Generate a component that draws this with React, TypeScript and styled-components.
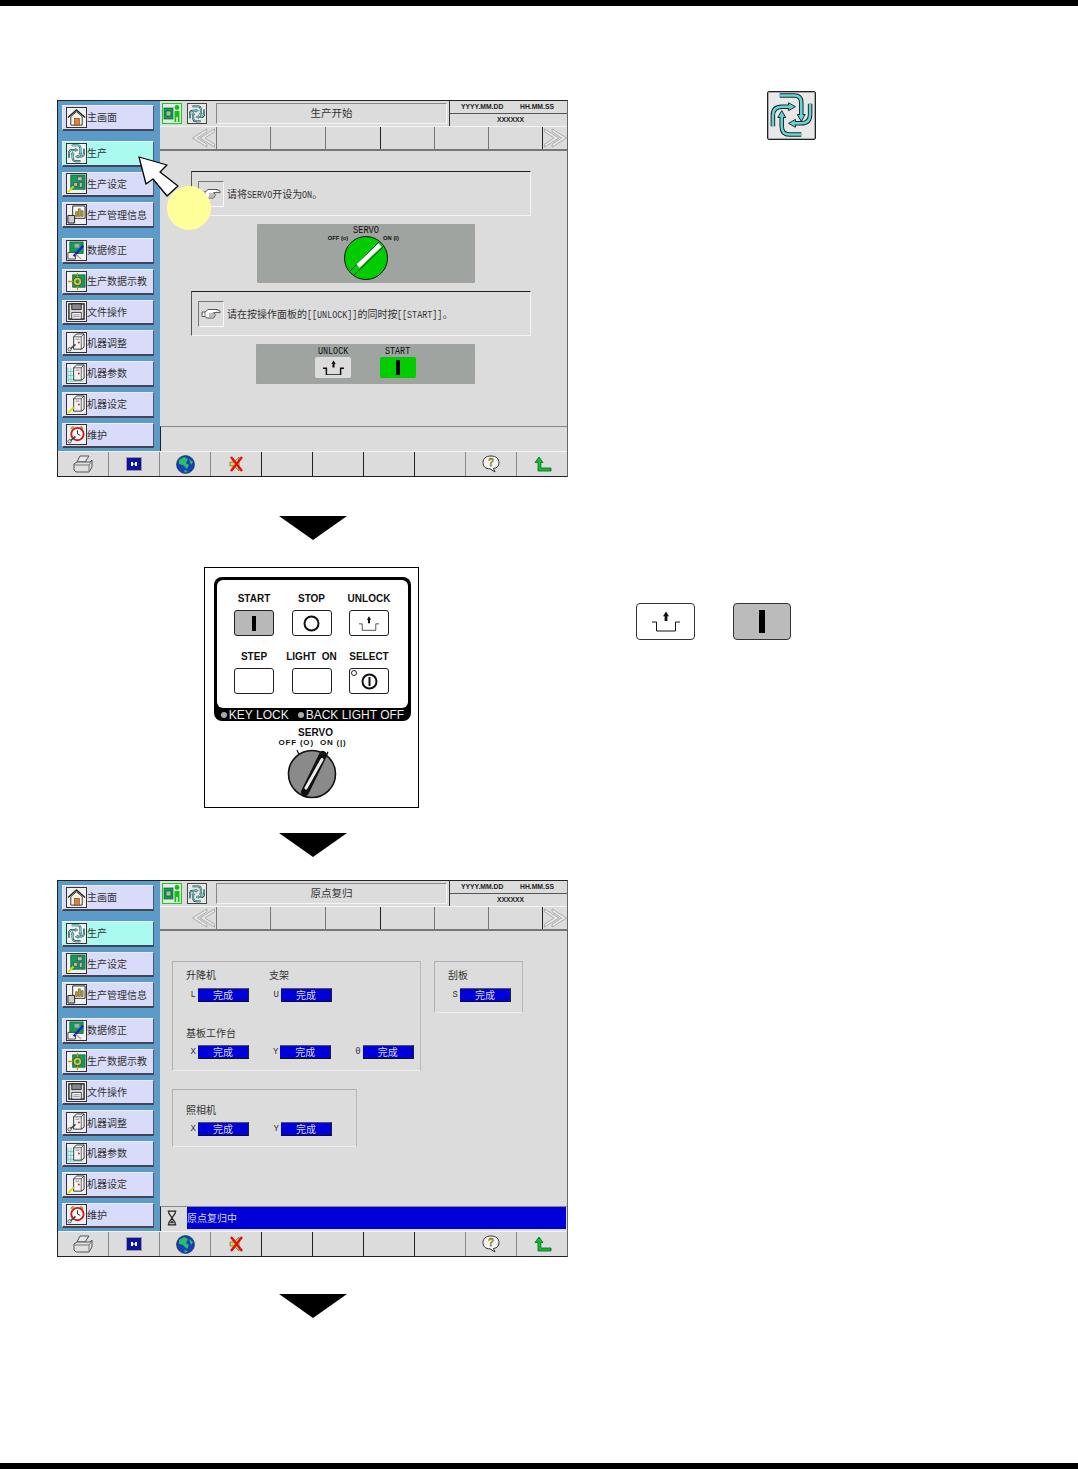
import React from 'react';
import styled, { createGlobalStyle } from 'styled-components';

const cjk = `"Noto Sans CJK SC", "Liberation Sans", sans-serif`;
const sans = `"Liberation Sans", Arial, sans-serif`;
const mono = `"Liberation Mono", monospace`;

const Global = createGlobalStyle`
  html, body { margin: 0; padding: 0; background: #fff; }
  body { font-family: ${cjk}; }
  * { box-sizing: border-box; }
`;

const Page = styled.div`
  width: 1078px; height: 1469px; display: flex; flex-direction: column; overflow: hidden; background: #fff;
`;
const EdgeBar = styled.div<{ $bottom?: boolean }>`
  height: 6px; flex: none; background: #000; margin-top: ${p => (p.$bottom ? 'auto' : '0')};
`;
const Sheet = styled.div`
  display: flex; flex-direction: column; padding: 85px 0 0 57px;
`;
const StepRow = styled.div`
  display: flex; align-items: flex-start;
`;
const DownArrow = styled.div<{ $top: number }>`
  width: 0; height: 0; margin: ${p => p.$top}px 0 0 222px;
  border-left: 34px solid transparent; border-right: 34px solid transparent; border-top: 24px solid #000;
`;

/* touch screen */
const Screen = styled.div<{ $top: number }>`
  position: relative; flex: none; width: 511px; height: 377px; margin-top: ${p => p.$top}px;
  border: 1px solid #222; border-right-color: #666; background: #dcdcdc;
  display: grid; grid-template-columns: 102px 1fr; grid-template-rows: 350px 25px;
`;
const Sidebar = styled.div`
  background: #5a9bc9; padding: 4px 0 0 4px; display: flex; flex-direction: column; gap: 5px;
`;
const SideButton = styled.div<{ $active?: boolean; $after?: number }>`
  width: 92px; height: 25.75px; flex: none; display: flex; align-items: center; padding-left: 3px;
  margin-bottom: ${p => p.$after ?? 0}px;
  background: ${p => (p.$active ? '#aafaf0' : '#d8dcfa')};
  border: 1px solid #eef; border-right-color: #556; border-bottom: 2px solid #445;
  font-size: 10px; line-height: 1; color: #333; white-space: nowrap;
`;
const IconBox = styled.span`
  width: 21px; height: 21px; flex: none; display: flex; align-items: center; justify-content: center;
  background: #f2f2f2; border: 1px solid #333;
  svg { display: block; }
`;
const Main = styled.div`
  display: flex; flex-direction: column; min-width: 0;
`;
const HeaderRow = styled.div`
  height: 25px; flex: none; display: flex; align-items: flex-start;
`;
const HeaderIcon = styled.span<{ $green?: boolean; $left: number }>`
  width: 20px; height: 21px; flex: none; margin: 2px 0 0 ${p => p.$left}px; display: flex; align-items: center; justify-content: center;
  border: 1px solid ${p => (p.$green ? '#16d016' : '#444')}; background: #e8e8e8;
`;
const TitleBox = styled.div`
  width: 231px; height: 21px; flex: none; margin: 2px 0 0 9px; display: flex; align-items: center; justify-content: center;
  border: 1px solid #888; border-right-color: #f4f4f4; border-bottom-color: #f4f4f4;
  font-size: 10.5px; line-height: 1; color: #333;
`;
const DateBox = styled.div`
  flex: 1; margin-left: 2px; display: flex; flex-direction: column;
  font-family: ${sans}; font-weight: 700; font-size: 6.8px; line-height: 1; color: #222;
`;
const DateRow = styled.div`
  height: 13px; flex: none; display: flex; align-items: center; justify-content: space-between; padding: 0 13px 0 11px;
  border-left: 1px solid #333; border-bottom: 1px solid #555;
`;
const CodeRow = styled.div`
  height: 12px; flex: none; display: flex; align-items: center; justify-content: center; padding: 1px 0 0 4px;
  border-left: 1px solid #333;
`;
const NavRow = styled.div`
  height: 25px; flex: none; display: flex; padding-left: 31px; border-top: 1px solid #f4f4f4; border-bottom: 2px solid #777;
`;
const NavCell = styled.div<{ $w: number; $dark?: boolean }>`
  width: ${p => p.$w}px; flex: none; display: flex; align-items: center; justify-content: center;
  border-right: 1px solid ${p => (p.$dark ? '#222' : '#777')};
  &:last-child { border-right: none; }
`;
const PromptContent = styled.div`
  flex: 1; min-height: 0; padding: 20px 0 0 31px; display: flex; flex-direction: column; align-items: flex-start; gap: 8px;
`;
const MessageBox = styled.div`
  width: 340px; height: 45px; flex: none; display: flex; align-items: center; gap: 3px; padding-left: 6px;
  border: 1px solid #f4f4f4; border-top-color: #222; border-left-color: #555;
  font-size: 10px; line-height: 1; color: #333; white-space: nowrap;
`;
const MessageText = styled.span`
  padding-top: 2px;
`;
const HandFrame = styled.span`
  width: 26px; height: 26px; flex: none; display: flex; align-items: center; justify-content: center;
  border: 1px solid #f8f8f8; border-top-color: #777; border-left-color: #777;
`;
/* narrow bitmap-style latin: a 6px mono cell squeezed to 5px */
const Narrow = styled.span<{ $n: number }>`
  display: inline-block; font-family: ${mono}; font-size: 10px; line-height: 1;
  transform: scaleX(.84); transform-origin: 0 50%; margin-right: ${p => -p.$n * 0.96}px;
`;
const GrayPanel = styled.div<{ $h: number; $left: number; $w: number }>`
  width: ${p => p.$w}px; height: ${p => p.$h}px; flex: none; margin-left: ${p => p.$left}px; background: #a0a4a0;
  border-radius: 1px;
`;
const ServoArt = styled.svg`
  display: block;
`;
const KeyPanel = styled(GrayPanel)`
  display: flex; gap: 29px; padding: 3px 0 0 59px;
`;
const KeyColumn = styled.div`
  width: 36px; display: flex; flex-direction: column; align-items: center; color: #111;
`;
const KeyLabel = styled.div`
  height: 10px; display: flex; align-items: center; white-space: nowrap;
`;
const KeyCap = styled.div<{ $green?: boolean }>`
  width: 36px; height: 21px; display: flex; align-items: center; justify-content: center; border-radius: 2px;
  background: ${p => (p.$green ? '#00cc00' : '#dcdcdc')};
`;
const StatusBar = styled.div`
  height: 25px; flex: none; margin-top: auto; display: flex; align-items: stretch; gap: 4px; padding: 0 1px 2px 0;
  border-top: 1px solid #888; border-left: 1px solid #222;
  font-size: 10px; color: #dde;
`;
const HourglassCell = styled.div`
  width: 22px; flex: none; display: flex; align-items: center; justify-content: center;
`;
const StatusText = styled.div<{ $blue?: boolean }>`
  flex: 1; display: flex; align-items: center; background: ${p => (p.$blue ? '#0000d8' : 'transparent')}; line-height: 1;
`;
const Toolbar = styled.div`
  grid-column: 1 / -1; display: grid; grid-template-columns: repeat(10, 51px); border-top: 1px solid #f4f4f4;
`;
const ToolCell = styled.div<{ $dark?: boolean }>`
  display: flex; align-items: center; justify-content: center;
  border-right: 1px solid ${p => (p.$dark ? '#222' : '#888')};
  &:last-child { border-right: none; }
`;
const Callout = styled.svg`
  position: absolute; left: 72px; top: 48px; pointer-events: none;
`;

/* homing content */
const HomingContent = styled.div`
  flex: 1; min-height: 0; padding: 30px 0 0 12px; display: flex; flex-direction: column;
`;
const GroupRow = styled.div`
  display: flex; gap: 13px; align-items: flex-start;
`;
const Group = styled.div<{ $w: number; $h: number; $pad: number; $top?: number }>`
  width: ${p => p.$w}px; height: ${p => p.$h}px; flex: none; padding-top: ${p => p.$pad}px; margin-top: ${p => p.$top ?? 0}px;
  border: 1px solid #b0b0b0; border-bottom-color: #ececec; border-right-color: #b8b8b8;
`;
const TitleRow = styled.div<{ $gap?: number; $top?: number }>`
  display: flex; height: 12px; margin-top: ${p => p.$top ?? 0}px; margin-bottom: ${p => p.$gap ?? 7}px;
`;
const GroupTitle = styled.div`
  width: 83px; padding-left: 13px; font-size: 10px; line-height: 12px; color: #333; white-space: nowrap;
`;
const FieldRow = styled.div`
  display: flex;
`;
const Axis = styled.div`
  width: 83px; display: flex; align-items: center;
`;
const AxisName = styled.span`
  width: 25px; padding-right: 2px; text-align: right; font-family: ${mono}; font-size: 9px; line-height: 1; color: #333;
`;
const DoneField = styled.div`
  width: 51px; height: 14px; display: flex; align-items: center; justify-content: center;
  background: #0000d8; border-top: 1px solid #555; border-bottom: 1px solid #111; border-right: 1px solid #222;
  font-size: 10px; line-height: 1; color: #d8d8ff;
`;

/* operation panel */
const OpPanel = styled.div`
  width: 215px; height: 241px; flex: none; margin: 27px 0 0 147px; padding: 9px 7px 0 9px; border: 1px solid #000;
  display: flex; flex-direction: column; align-items: center;
`;
const OpFrame = styled.div`
  width: 197px; height: 144px; flex: none; padding: 3px 3px 0; background: #000; border-radius: 8px; display: flex; flex-direction: column;
`;
const OpFace = styled.div`
  height: 128px; flex: none; background: #fff; border-radius: 6px; padding: 12px 0 0 17px;
  display: grid; grid-template-columns: repeat(3, 40px); column-gap: 17.5px; row-gap: 14px; align-content: start;
`;
const OpCell = styled.div`
  display: flex; flex-direction: column; align-items: center; gap: 6px;
`;
const OpLabel = styled.div`
  height: 12px; font: 700 10px/14px ${sans}; color: #111; white-space: pre;
`;
const OpKey = styled.div<{ $gray?: boolean }>`
  position: relative; width: 40px; height: 26px; display: flex; align-items: center; justify-content: center;
  border: 1px solid #222; border-radius: 3px; background: ${p => (p.$gray ? '#b8b8b8' : '#fff')};
`;
const Led = styled.span`
  position: absolute; left: 1px; top: 1px; width: 6px; height: 6px; border-radius: 50%; border: 1px solid #222; background: #fff;
`;
const OpStrip = styled.div`
  height: 13px; display: flex; align-items: center; justify-content: center; gap: 9px; padding-top: 1px;
  color: #eee; font: 400 12px/13px ${sans}; white-space: nowrap;
`;
const StripItem = styled.span`
  display: flex; align-items: center; gap: 2px;
`;
const StripDot = styled.span`
  width: 6px; height: 6px; border-radius: 50%; background: #aaa;
`;
const ServoTitle = styled.div`
  margin-top: 6px; padding-left: 6px; font: 700 10px/11px ${sans}; color: #111;
`;
const ServoStates = styled.div`
  font: 700 8px/9px ${sans}; letter-spacing: .8px; color: #111; white-space: pre;
`;
const ServoDial = styled.svg`
  display: block; margin-top: -1px;
`;

/* right-hand key pictures */
const LargeIcon = styled.div`
  width: 49px; height: 49px; flex: none; margin-left: 199px; background: #e8e8e8; border: 1px solid #222; border-radius: 2px;
  box-shadow: inset 0 0 0 1px #aaa;
`;
const KeyPair = styled.div`
  display: flex; gap: 38px; margin: 63px 0 0 217px;
`;
const BigKey = styled.div<{ $gray?: boolean }>`
  width: ${p => (p.$gray ? 58 : 59)}px; height: 37px; display: flex; align-items: center; justify-content: center;
  border: 1px solid #333; border-radius: 4px; background: ${p => (p.$gray ? '#bbb' : '#fff')};
`;
const BigBar = styled.span`
  width: 6px; height: 23px; background: #000;
`;
const OpBar = styled.span`
  width: 4px; height: 15px; background: #000;
`;

/* drawings */
const cycleArms = [
  'M12 3.5H27Q34 3.5 34 11V24',
  'M43 12V23Q43 32 34 32H27',
  'M34 43.5H22Q14 43.5 14 35V25',
  'M5 35V24Q5 15 14 15H22',
];
const cycleHeads = ['M30 23H38L34 30Z', 'M28 28V36L21 32Z', 'M10 26H18L14 19Z', 'M21 11V19L28 15Z'];
const CycleGlyph = ({ size }: { size: number }) => (
  <svg width={size} height={size} viewBox="0 0 48 48">
    {cycleArms.map(d => <path key={d} d={d} fill="none" stroke="#222" strokeWidth="4.6" />)}
    {cycleHeads.map(d => <path key={d} d={d} fill="#5fd8d8" stroke="#222" strokeWidth="1" />)}
    {cycleArms.map(d => <path key={d + 'c'} d={d} fill="none" stroke="#5fd8d8" strokeWidth="2.6" />)}
  </svg>
);
const S = 19;
const Home = () => (
  <svg width={S} height={S} viewBox="0 0 20 20">
    <path d="M1 10L10 2L19 10" fill="none" stroke="#222" strokeWidth="1.4" />
    <path d="M4 9V18H16V9L10 4Z" fill="#f8f4e0" stroke="#333" />
    <rect x="8" y="11" width="5" height="7" fill="#e08030" stroke="#632" strokeWidth=".6" />
  </svg>
);
const Wand = () => <path d="M1 19L7 13" stroke="#dd0" strokeWidth="2" />;
const Board = ({ x = 4, y = 1, w = 15, h = 15 }: { x?: number; y?: number; w?: number; h?: number }) => (
  <rect x={x} y={y} width={w} height={h} fill="#159a58" stroke="#063" strokeWidth=".8" />
);
const Setting = () => (
  <svg width={S} height={S} viewBox="0 0 20 20">
    <Board />
    <path d="M11 3h5v4h-5zM7 9h4v4H7zM13 9h3v5h-3z" fill="#bbb" stroke="#222" strokeWidth=".5" />
    <Wand />
  </svg>
);
const Chart = () => (
  <svg width={S} height={S} viewBox="0 0 20 20">
    <path d="M6 1H19V14H6Z" fill="#fff" stroke="#222" />
    <path d="M9 12V7h2v5zM12 12V4h2v8zM15 12V6h2v6z" fill="#d8a820" stroke="#222" strokeWidth=".5" />
    <path d="M1 11H8V19H1Z" fill="#ccc" stroke="#222" />
  </svg>
);
const Edit = () => (
  <svg width={S} height={S} viewBox="0 0 20 20">
    <Board x={3} y={1} w={14} h={12} />
    <rect x="8" y="3" width="5" height="4" fill="#aaa" />
    <path d="M1 12H9V19H1Z" fill="#eee" stroke="#222" strokeWidth=".8" />
    <path d="M7 16L17 5" stroke="#1020d0" strokeWidth="2.4" />
    <path d="M9 14L15 19" stroke="#c98" strokeWidth="1.2" />
  </svg>
);
const Teach = () => (
  <svg width={S} height={S} viewBox="0 0 20 20">
    <Board x={6} y={3} w={13} h={13} />
    <circle cx="11" cy="10" r="4.5" fill="#d8c040" stroke="#333" strokeWidth=".8" />
    <path d="M1 10H6M11 1V5M11 15V19" stroke="#c0a000" strokeWidth="1.4" />
    <circle cx="11" cy="10" r="2" fill="#1a9a50" />
  </svg>
);
const Floppy = () => (
  <svg width={S} height={S} viewBox="0 0 20 20">
    <path d="M2 2H18V18H2Z" fill="#ddd" stroke="#111" strokeWidth="1.3" />
    <path d="M5 2H15V8H5Z" fill="#888" stroke="#111" strokeWidth=".8" />
    <path d="M5 11H15V18H5Z" fill="#fff" stroke="#111" strokeWidth=".8" />
    <path d="M6.5 13.5H13.5M6.5 15.5H13.5" stroke="#555" strokeWidth=".7" />
  </svg>
);
const Machine = () => (
  <>
    <path d="M7 4L10 1H18V15L15 17H7Z" fill="#f4f4f4" stroke="#222" strokeWidth=".9" />
    <path d="M15 17V4H7M15 4L18 1" fill="none" stroke="#222" strokeWidth=".7" />
    <circle cx="12.5" cy="10" r="1" fill="#d02020" />
    <path d="M9 6.5H13" stroke="#555" strokeWidth=".7" />
  </>
);
const Wrench = () => (
  <>
    <path d="M2 18L9 12" stroke="#444" strokeWidth="1.6" />
    <circle cx="2.8" cy="17.2" r="1.8" fill="#ddd" stroke="#333" strokeWidth=".7" />
  </>
);
const Adjust = () => <svg width={S} height={S} viewBox="0 0 20 20"><Machine /><Wrench /></svg>;
const Param = () => (
  <svg width={S} height={S} viewBox="0 0 20 20">
    <path d="M1 4V18H17M1 8H7M1 12H7M1 16H17M4 4V18" fill="none" stroke="#45c8c8" strokeWidth=".8" />
    <Machine />
  </svg>
);
const MachineSet = () => <svg width={S} height={S} viewBox="0 0 20 20"><Machine /><Wand /></svg>;
const Alarm = () => (
  <svg width={S} height={S} viewBox="0 0 20 20">
    <path d="M4 4L7 1.5M17 4L14 1.5" stroke="#d09020" strokeWidth="2" />
    <circle cx="11" cy="9.5" r="6.5" fill="#fff" stroke="#d01818" strokeWidth="2" />
    <path d="M11 5.5V9.5L14 11" fill="none" stroke="#222" strokeWidth="1" />
    <Wrench />
  </svg>
);
const PersonIcon = () => (
  <svg width="18" height="19" viewBox="0 0 18 19">
    <rect x="1" y="4" width="9" height="11" fill="#159a58" stroke="#063" strokeWidth=".7" />
    <path d="M3 7h5v5H3z" fill="#8c8" stroke="#222" strokeWidth=".5" />
    <circle cx="14" cy="3.5" r="2.4" fill="#11c011" />
    <path d="M11.5 7H16.5V18H14.8V13H13.2V18H11.5Z" fill="#11c011" />
  </svg>
);
const Chevrons = ({ right }: { right?: boolean }) => (
  <svg width="25" height="22" viewBox="0 0 25 23">
    <g transform={right ? 'translate(25 0) scale(-1 1)' : undefined} fill="#e8e8e8" stroke="#aaa" strokeWidth="1">
      <path d="M24 2L9 11.5L24 21V18L14 11.5L24 5Z" />
      <path d="M16 2L1 11.5L16 21V18L6 11.5L16 5Z" />
    </g>
  </svg>
);
const Hand = () => (
  <svg width="20" height="14" viewBox="0 0 20 14">
    <path d="M1 5H4L7 2.5H16L19 4V5.6H12.5L14 7.2V9L12.5 11H6L4 9.5H1Z" fill="#fff" stroke="#444" strokeWidth=".9" />
    <path d="M4 5V9.5M8 7H13M8 9H13" stroke="#444" strokeWidth=".7" fill="none" />
  </svg>
);
const UnlockGlyph = ({ w, sw }: { w: number; sw: number }) => (
  <svg width={w} height={w * 0.75} viewBox="0 0 28 21">
    <path d="M0 11H4.5V20H23.5V11H28" fill="none" stroke="#111" strokeWidth={sw} />
    <path d="M14 0.5L17 5.2H15.4V10H12.6V5.2H11Z" fill="#111" />
  </svg>
);
const Printer = () => (
  <svg width="20" height="18" viewBox="0 0 20 18">
    <path d="M7 1H16L12 7H4Z" fill="#e6e6e6" stroke="#555" />
    <path d="M1 9L4 7H17L19 5V12L16 17H3L1 15Z" fill="#e0e0e0" stroke="#555" />
    <path d="M1 10H16V16" fill="none" stroke="#777" />
    <path d="M16 10L19 6" stroke="#777" />
  </svg>
);
const Monitor = () => (
  <svg width="16" height="14" viewBox="0 0 16 14">
    <rect x=".5" y=".5" width="15" height="13" fill="#0a14a0" stroke="#999" />
    <path d="M5 5h2v4H5zM9 5h2v4H9z M6.5 6.5h3v1h-3z" fill="#fff" />
  </svg>
);
const Globe = () => (
  <svg width="19" height="19" viewBox="0 0 19 19">
    <circle cx="9.5" cy="9.5" r="9" fill="#1440b8" />
    <path d="M3 5L8 2L12 4L10 8L13 10L11 14L7 10L3 9ZM13 4L17 7L15 10ZM8 15L12 16L9 18Z" fill="#28c060" />
    <circle cx="9.5" cy="9.5" r="9" fill="none" stroke="#123" strokeWidth=".6" />
  </svg>
);
const Mute = () => (
  <svg width="17" height="18" viewBox="0 0 17 18">
    <path d="M2 7H6L11 2V16L6 11H2Z" fill="#e8d040" stroke="#664" strokeWidth=".7" />
    <path d="M3 2L14 16M14 2L3 16" stroke="#e01010" strokeWidth="2.4" />
  </svg>
);
const Help = () => (
  <svg width="18" height="18" viewBox="0 0 18 18">
    <path d="M9 1C14 1 17 3.5 17 8C17 11 15 13 11.5 13.5L13 17L8 13.8C3.5 13.8 1 11.5 1 7.5C1 3.5 4 1 9 1Z" fill="#f4f4f4" stroke="#333" />
    <text x="9" y="11" textAnchor="middle" fontFamily={sans} fontWeight="700" fontSize="10" fill="#c8b000" stroke="#333" strokeWidth=".3">?</text>
  </svg>
);
const Back = () => (
  <svg width="18" height="16" viewBox="0 0 18 16">
    <path d="M5 1L9 6.5H6.8V12H17V15H4V6.5H1Z" fill="#10c020" stroke="#063" strokeWidth=".8" />
  </svg>
);
const Hourglass = () => (
  <svg width="12" height="16" viewBox="0 0 10 15">
    <path d="M1 1H9M1 14H9M2 1V3L5 7.5L2 12V14M8 1V3L5 7.5L8 12V14" fill="none" stroke="#222" strokeWidth="1.1" />
    <path d="M3 12.5L5 9.5L7 12.5Z" fill="#333" />
  </svg>
);

const sideItems: { label: string; Icon: React.FC; after?: number; cycle?: boolean }[] = [
  { label: '主画面', Icon: Home, after: 5 },
  { label: '生产', Icon: () => <CycleGlyph size={19} />, cycle: true },
  { label: '生产设定', Icon: Setting },
  { label: '生产管理信息', Icon: Chart, after: 5 },
  { label: '数据修正', Icon: Edit },
  { label: '生产数据示教', Icon: Teach },
  { label: '文件操作', Icon: Floppy },
  { label: '机器调整', Icon: Adjust },
  { label: '机器参数', Icon: Param },
  { label: '机器设定', Icon: MachineSet },
  { label: '维护', Icon: Alarm },
];
const navCells = [54, 55, 55, 54, 54, 54];
const tools: { Icon?: React.FC; dark?: boolean }[] = [
  { Icon: Printer }, { Icon: Monitor }, { Icon: Globe }, { Icon: Mute, dark: true },
  { dark: true }, { dark: true }, { dark: true }, {}, { Icon: Help }, { Icon: Back },
];

type ScreenProps = {
  top: number; title: string; activeCycle?: boolean; status?: string; overlay?: React.ReactNode; children: React.ReactNode;
};
const TouchScreen = ({ top, title, activeCycle, status, overlay, children }: ScreenProps) => (
  <Screen $top={top}>
    <Sidebar>
      {sideItems.map(({ label, Icon, after, cycle }) => (
        <SideButton key={label} $after={after} $active={activeCycle && cycle}>
          <IconBox><Icon /></IconBox>
          {label}
        </SideButton>
      ))}
    </Sidebar>
    <Main>
      <HeaderRow>
        <HeaderIcon $green $left={2}><PersonIcon /></HeaderIcon>
        <HeaderIcon $left={5}><CycleGlyph size={18} /></HeaderIcon>
        <TitleBox>{title}</TitleBox>
        <DateBox>
          <DateRow><span>YYYY.MM.DD</span><span>HH.MM.SS</span></DateRow>
          <CodeRow>XXXXXX</CodeRow>
        </DateBox>
      </HeaderRow>
      <NavRow>
        <NavCell $w={26}><Chevrons /></NavCell>
        {navCells.map((w, i) => <NavCell key={i} $w={w} $dark={i === 5 || i === 2} />)}
        <NavCell $w={25}><Chevrons right /></NavCell>
      </NavRow>
      {children}
      <StatusBar>
        {status ? (
          <>
            <HourglassCell><Hourglass /></HourglassCell>
            <StatusText $blue>{status}</StatusText>
          </>
        ) : <StatusText />}
      </StatusBar>
    </Main>
    <Toolbar>
      {tools.map(({ Icon, dark }, i) => <ToolCell key={i} $dark={dark}>{Icon && <Icon />}</ToolCell>)}
    </Toolbar>
    {overlay}
  </Screen>
);

const AxisField = ({ name }: { name: string }) => (
  <Axis><AxisName>{name}</AxisName><DoneField>完成</DoneField></Axis>
);

export default function App() {
  return (
    <Page>
      <Global />
      <EdgeBar />
      <Sheet>
        <StepRow>
          <TouchScreen
            top={9}
            title="生产开始"
            activeCycle
            overlay={
              <Callout width="90" height="90" viewBox="0 0 90 90">
                <circle cx="59" cy="59" r="22" fill="#ffff99" />
                <path d="M9 8L37 16L30 23L48 37L37 47L23 30L16 35Z" fill="#fff" stroke="#000" strokeWidth="1.3" strokeLinejoin="round" />
              </Callout>
            }
          >
            <PromptContent>
              <MessageBox>
                <HandFrame><Hand /></HandFrame>
                <MessageText>请将<Narrow $n={5}>SERVO</Narrow>开设为<Narrow $n={2}>ON</Narrow>。</MessageText>
              </MessageBox>
              <GrayPanel $w={218} $h={59} $left={66}>
                <ServoArt width="218" height="59" viewBox="0 0 218 59">
                  <text x="109" y="9" textAnchor="middle" fontFamily={mono} fontSize="10" textLength="26" lengthAdjust="spacingAndGlyphs" fill="#111">SERVO</text>
                  <text x="81" y="16" textAnchor="middle" fontFamily={sans} fontWeight="700" fontSize="5.8" fill="#111">OFF (o)</text>
                  <text x="134" y="16" textAnchor="middle" fontFamily={sans} fontWeight="700" fontSize="5.8" fill="#111">ON (I)</text>
                  <circle cx="109" cy="34" r="21.5" fill="#00cc00" stroke="#111" strokeWidth="1" />
                  <path d="M92 48L122 18M97 51L127 22" stroke="#111" strokeWidth=".8" />
                  <path d="M101 42L123 21" stroke="#fff" strokeWidth="4.5" />
                </ServoArt>
              </GrayPanel>
              <MessageBox>
                <HandFrame><Hand /></HandFrame>
                <MessageText>请在按操作面板的<Narrow $n={10}>[[UNLOCK]]</Narrow>的同时按<Narrow $n={9}>[[START]]</Narrow>。</MessageText>
              </MessageBox>
              <KeyPanel $w={219} $h={40} $left={65}>
                <KeyColumn>
                  <KeyLabel><Narrow $n={6}>UNLOCK</Narrow></KeyLabel>
                  <KeyCap><UnlockGlyph w={21} sw={2} /></KeyCap>
                </KeyColumn>
                <KeyColumn>
                  <KeyLabel><Narrow $n={5}>START</Narrow></KeyLabel>
                  <KeyCap $green><OpBar /></KeyCap>
                </KeyColumn>
              </KeyPanel>
            </PromptContent>
          </TouchScreen>
          <LargeIcon><CycleGlyph size={47} /></LargeIcon>
        </StepRow>

        <DownArrow $top={39} />

        <StepRow>
          <OpPanel>
            <OpFrame>
              <OpFace>
                <OpCell><OpLabel>START</OpLabel><OpKey $gray><OpBar /></OpKey></OpCell>
                <OpCell>
                  <OpLabel>STOP</OpLabel>
                  <OpKey>
                    <svg width="17" height="17" viewBox="0 0 17 17"><circle cx="8.5" cy="8.5" r="7" fill="none" stroke="#111" strokeWidth="2" /></svg>
                  </OpKey>
                </OpCell>
                <OpCell><OpLabel>UNLOCK</OpLabel><OpKey><UnlockGlyph w={20} sw={1} /></OpKey></OpCell>
                <OpCell><OpLabel>STEP</OpLabel><OpKey /></OpCell>
                <OpCell><OpLabel>{'LIGHT  ON'}</OpLabel><OpKey /></OpCell>
                <OpCell>
                  <OpLabel>SELECT</OpLabel>
                  <OpKey>
                    <Led />
                    <svg width="17" height="17" viewBox="0 0 17 17">
                      <circle cx="8.5" cy="8.5" r="7" fill="none" stroke="#111" strokeWidth="2" />
                      <path d="M8.5 4V13" stroke="#111" strokeWidth="2" />
                    </svg>
                  </OpKey>
                </OpCell>
              </OpFace>
              <OpStrip>
                <StripItem><StripDot />KEY LOCK</StripItem>
                <StripItem><StripDot />BACK LIGHT OFF</StripItem>
              </OpStrip>
            </OpFrame>
            <ServoTitle>SERVO</ServoTitle>
            <ServoStates>{'OFF (O)  ON (|)'}</ServoStates>
            <ServoDial width="60" height="56" viewBox="0 0 60 56">
              <path d="M14 4L16 9M45 5.7L43 10.7" stroke="#111" strokeWidth="1.2" />
              <circle cx="29" cy="28" r="23.5" fill="#8a8a8a" stroke="#111" strokeWidth="1.6" />
              <path d="M22 46L40 9" stroke="#111" strokeWidth="8" strokeLinecap="round" />
              <path d="M23 42L39 13.5" stroke="#eee" strokeWidth="3" strokeLinecap="round" />
            </ServoDial>
          </OpPanel>
          <KeyPair>
            <BigKey><UnlockGlyph w={28} sw={1} /></BigKey>
            <BigKey $gray><BigBar /></BigKey>
          </KeyPair>
        </StepRow>

        <DownArrow $top={25} />

        <TouchScreen top={23} title="原点复归" activeCycle status="原点复归中">
          <HomingContent>
            <GroupRow>
              <Group $w={249} $h={110} $pad={7}>
                <TitleRow>
                  <GroupTitle>升降机</GroupTitle>
                  <GroupTitle>支架</GroupTitle>
                </TitleRow>
                <FieldRow>
                  <AxisField name="L" />
                  <AxisField name="U" />
                </FieldRow>
                <TitleRow $top={25} $gap={6}>
                  <GroupTitle>基板工作台</GroupTitle>
                </TitleRow>
                <FieldRow>
                  <AxisField name="X" />
                  <AxisField name="Y" />
                  <AxisField name="θ" />
                </FieldRow>
              </Group>
              <Group $w={89} $h={52} $pad={7}>
                <TitleRow><GroupTitle>刮板</GroupTitle></TitleRow>
                <FieldRow><AxisField name="S" /></FieldRow>
              </Group>
            </GroupRow>
            <Group $w={185} $h={58} $pad={14} $top={18}>
              <TitleRow $gap={6}><GroupTitle>照相机</GroupTitle></TitleRow>
              <FieldRow>
                <AxisField name="X" />
                <AxisField name="Y" />
              </FieldRow>
            </Group>
          </HomingContent>
        </TouchScreen>

        <DownArrow $top={37} />
      </Sheet>
      <EdgeBar $bottom />
    </Page>
  );
}
